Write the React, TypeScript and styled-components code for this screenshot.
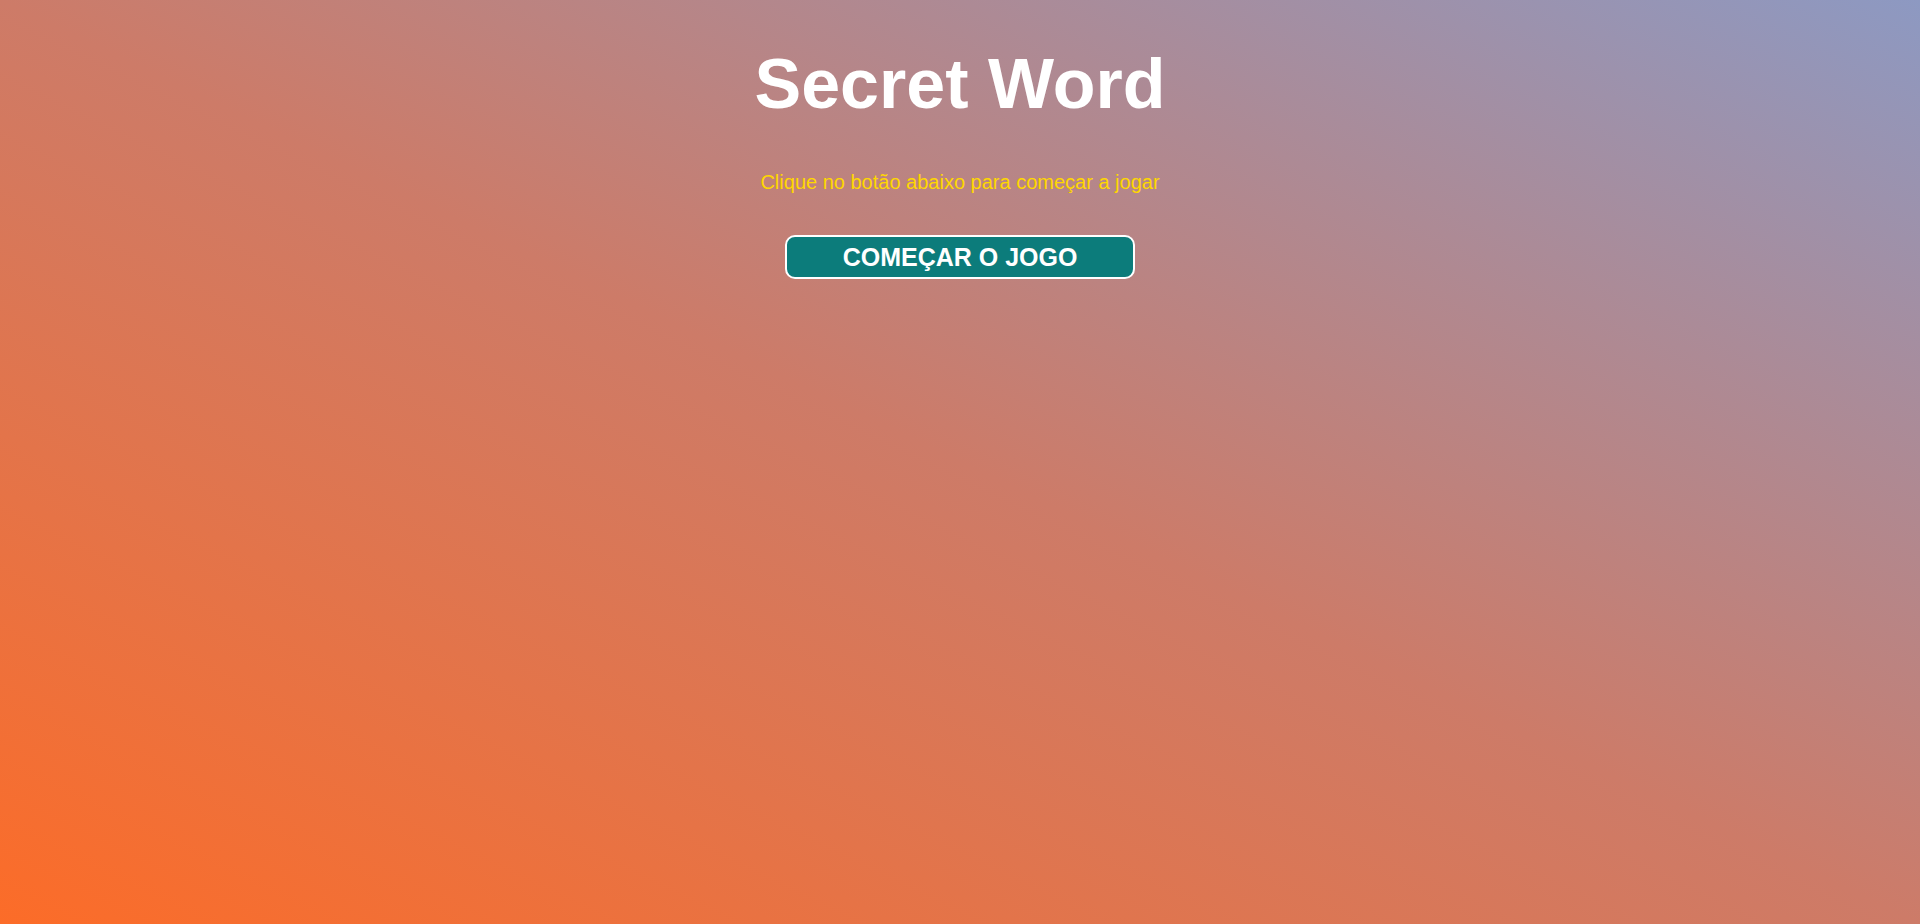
import React from "react";
import styled, { createGlobalStyle } from "styled-components";

const GlobalStyle = createGlobalStyle`
  html, body {
    margin: 0;
    padding: 0;
    height: 100%;
  }
  body {
    font-family: "Liberation Sans", Arial, sans-serif;
  }
  #root {
    min-height: 100vh;
  }
`;

const Page = styled.div`
  min-height: 100vh;
  box-sizing: border-box;
  background: linear-gradient(to top right, #fc6c28 0%, #cd7b68 50%, #8d99c2 100%);
  display: flex;
  flex-direction: column;
  align-items: center;
  padding-top: 44px;
  text-align: center;
`;

const Title = styled.h1`
  margin: 0;
  font-size: 70px;
  font-weight: 700;
  color: #ffffff;
  line-height: normal;
`;

const Subtitle = styled.p`
  margin: 47px 0 0;
  font-size: 20px;
  color: #ffd700;
  line-height: 22px;
`;

const StartButton = styled.button`
  margin-top: 42px;
  width: 350px;
  height: 44px;
  box-sizing: border-box;
  background: #0c7c7b;
  color: #ffffff;
  border: 2px solid #ffffff;
  border-radius: 10px;
  font-family: "Liberation Sans", Arial, sans-serif;
  font-weight: 700;
  font-size: 25px;
  line-height: 28px;
  text-transform: uppercase;
  cursor: pointer;
  padding: 0;
`;

export default function App() {
  return (
    <>
      <GlobalStyle />
      <Page>
        <Title>Secret Word</Title>
        <Subtitle>Clique no botão abaixo para começar a jogar</Subtitle>
        <StartButton>Começar o jogo</StartButton>
      </Page>
    </>
  );
}
